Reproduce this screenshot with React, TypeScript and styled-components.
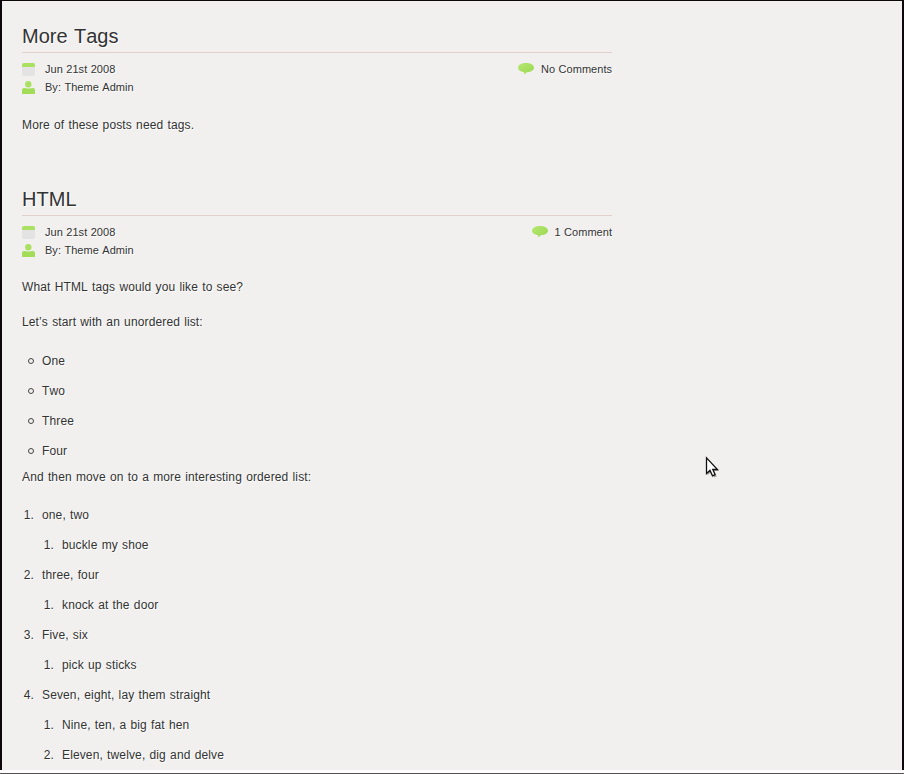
import React from "react";
import styled, { createGlobalStyle } from "styled-components";

const GlobalStyle = createGlobalStyle`
  * { box-sizing: border-box; }
  html, body { margin: 0; padding: 0; background: #fff; overflow: hidden; }
  body {
    font-family: "Liberation Sans", Arial, Helvetica, sans-serif;
    font-size: 12px;
    font-kerning: none;
    color: #333;
  }
`;

const Window = styled.div`
  position: relative;
  display: flex;
  flex-direction: column;
  height: 774px;
  overflow: hidden;
`;

const Viewport = styled.main`
  height: 770px;
  padding: 19px 20px 0;
  border: solid #0b070a;
  border-width: 1px 2px 0;
  background: #f1f0ee;
  overflow: hidden;
`;

const StatusEdge = styled.div`
  height: 4px;
  border-bottom: 1px solid #555254;
  background: #fff;
`;

const Post = styled.article<{ $gap?: number }>`
  width: 590px;
  margin-bottom: ${({ $gap = 0 }) => $gap}px;
  text-shadow: 1px 1px 1px #fff;
`;

const Title = styled.h2`
  height: 33px;
  margin: 0 0 7px;
  border-bottom: 1px solid #e1d0cc;
  font-size: 20px;
  font-weight: 400;
  line-height: 32px;
  letter-spacing: 0.04px;
  word-spacing: 0.6px;
`;

const Meta = styled.div`
  display: flex;
  justify-content: space-between;
  align-items: flex-start;
  font-size: 11px;
  line-height: 18px;
  letter-spacing: 0.03px;
  word-spacing: 0.4px;
`;

const MetaItem = styled.div<{ $gap: number }>`
  display: flex;
  align-items: center;
  gap: ${({ $gap }) => $gap}px;
  height: 18px;
  white-space: nowrap;

  svg { display: block; flex: none; }
`;

const Body = styled.div<{ $top: number }>`
  padding-top: ${({ $top }) => $top}px;
  letter-spacing: 0.13px;
  word-spacing: 0.7px;
`;

const Paragraph = styled.p<{ $after?: number }>`
  margin: 0 0 ${({ $after = 0 }) => $after}px;
  line-height: 20px;
`;

const List = styled.ul<{ $after?: number }>`
  margin: 0 0 ${({ $after = 0 }) => $after}px;
  padding: 0;
  list-style: none;
`;

const Line = styled.div`
  display: flex;
  align-items: center;
  height: 30px;
  line-height: 30px;
`;

const Ring = styled.span`
  width: 6px;
  height: 6px;
  margin: 0 8px 0 6px;
  border: 1.5px solid #444;
  border-radius: 50%;
`;

const Marker = styled.span`
  width: 12px;
  margin-right: 8px;
  text-align: right;
`;

const SubList = styled(List)`
  padding-left: 20px;
`;

const Pointer = styled.svg`
  position: absolute;
  left: 705px;
  top: 456px;
`;

const CalendarIcon = () => (
  <svg width="13" height="14" viewBox="0 0 13 14">
    <rect y="1" width="13" height="13" rx="2" fill="#e3e3e3" />
    <path d="M0 5V3a2 2 0 0 1 2-2h9a2 2 0 0 1 2 2v2z" fill="#abe163" />
  </svg>
);

const PersonIcon = () => (
  <svg width="13" height="14" viewBox="0 0 13 14">
    <circle cx="6.3" cy="4.2" r="3.2" fill="#abe163" />
    <path d="M0 14v-4A2 2 0 0 1 2 8c1.500 0 2.300.500 4.500.500S9.500 8 11 8a2 2 0 0 1 2 2v4z" fill="#a3dc57" />
  </svg>
);

const BubbleIcon = () => (
  <svg width="16" height="12" viewBox="0 0 16 12">
    <defs>
      <linearGradient id="bubble" x1="0" y1="0" x2="1" y2="1">
        <stop offset="0" stopColor="#b5e873" />
        <stop offset="1" stopColor="#9bd650" />
      </linearGradient>
    </defs>
    <path
      d="M8 0c4.500 0 8 2 8 4.700C16 7.200 12.700 9 9 9.200L5.700 11.500l.5-2.400C2.700 8.700 0 7 0 4.700 0 2 3.500 0 8 0z"
      fill="url(#bubble)"
    />
  </svg>
);

function PostMeta({ comments, gap }: { comments: string; gap: number }) {
  return (
    <Meta>
      <div>
        <MetaItem $gap={10}><CalendarIcon />Jun 21st 2008</MetaItem>
        <MetaItem $gap={10}><PersonIcon />By: Theme Admin</MetaItem>
      </div>
      <MetaItem $gap={gap}><BubbleIcon />{comments}</MetaItem>
    </Meta>
  );
}

const bullets = ["One", "Two", "Three", "Four"];

const rhyme = [
  { text: "one, two", children: ["buckle my shoe"] },
  { text: "three, four", children: ["knock at the door"] },
  { text: "Five, six", children: ["pick up sticks"] },
  { text: "Seven, eight, lay them straight", children: ["Nine, ten, a big fat hen", "Eleven, twelve, dig and delve"] },
];

export default function App() {
  return (
    <>
      <GlobalStyle />
      <Window>
        <Viewport>
          <Post $gap={48}>
            <Title>More Tags</Title>
            <PostMeta comments="No Comments" gap={7} />
            <Body $top={19}>
              <Paragraph>More of these posts need tags.</Paragraph>
            </Body>
          </Post>
          <Post>
            <Title>HTML</Title>
            <PostMeta comments="1 Comment" gap={6} />
            <Body $top={18}>
              <Paragraph $after={15}>What HTML tags would you like to see?</Paragraph>
              <Paragraph $after={14}>Let’s start with an unordered list:</Paragraph>
              <List $after={1}>
                {bullets.map((text) => (
                  <li key={text}><Line><Ring />{text}</Line></li>
                ))}
              </List>
              <Paragraph $after={13}>And then move on to a more interesting ordered list:</Paragraph>
              <List as="ol">
                {rhyme.map((item, i) => (
                  <li key={item.text}>
                    <Line><Marker>{i + 1}.</Marker>{item.text}</Line>
                    <SubList as="ol">
                      {item.children.map((text, j) => (
                        <li key={text}><Line><Marker>{j + 1}.</Marker>{text}</Line></li>
                      ))}
                    </SubList>
                  </li>
                ))}
              </List>
            </Body>
          </Post>
        </Viewport>
        <StatusEdge />
        <Pointer width="17" height="24" viewBox="0 0 17 24">
          <path d="M2 2v16.500l3.800-3.400 2.500 5.700 2.900-1.200-2.500-5.500h4.500z" fill="#000" opacity=".3" transform="translate(.6 .8)" />
          <path d="M1.500 1.800v15.800l3.500-3.200 2.500 5.400 2.600-1.100-2.300-5.200h4.700z" fill="#fff" stroke="#111" strokeWidth="1.300" />
        </Pointer>
      </Window>
    </>
  );
}
